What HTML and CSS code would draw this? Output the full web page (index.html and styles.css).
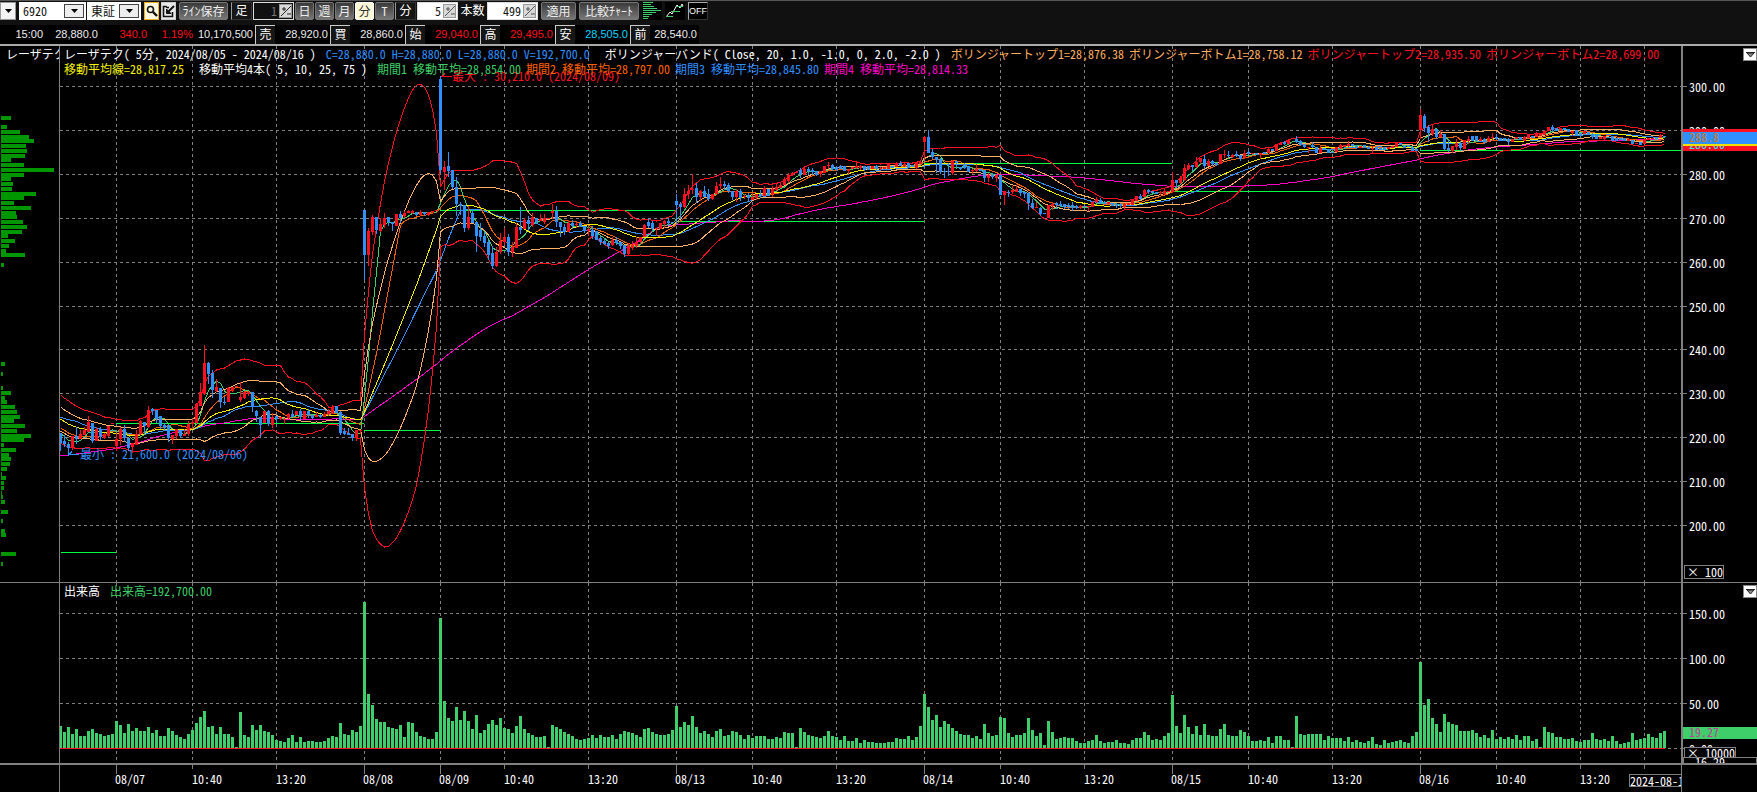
FILE: index.html
```html
<!DOCTYPE html>
<html lang="ja">
<head>
<meta charset="utf-8">
<title>レーザテク 6920 - 5分足チャート</title>
<link rel="stylesheet" href="styles.css">
</head>
<body>
<header class="top">
  <form class="toolbar" onsubmit="return false">
    <button class="drop" type="button" aria-label="メニュー"><svg width="7" height="4"><path d="M0 0h7L3.500 4z"/></svg></button>
    <span class="group tight">
      <span class="combo combo-code"><select aria-label="銘柄コード"><option>6920</option></select><span class="combo-arrow"><svg width="7" height="4"><path d="M0 0h7L3.500 4z"/></svg></span></span>
      <span class="combo combo-market"><select aria-label="市場"><option>東証</option></select><span class="combo-arrow"><svg width="7" height="4"><path d="M0 0h7L3.500 4z"/></svg></span></span>
    </span>
    <span class="group icons">
      <button class="icon-btn search" type="button" aria-label="検索"><svg width="12" height="12" viewBox="0 0 12 12"><circle cx="4.500" cy="4.500" r="3" fill="none" stroke="#111" stroke-width="1.600"/><path d="M7 7l4 4" stroke="#111" stroke-width="2.400"/></svg></button>
      <button class="icon-btn" type="button" aria-label="編集"><svg width="13" height="13" viewBox="0 0 13 13" fill="none" stroke="#111"><path d="M7 2.500H5L4 1.500H1.500v10h9V7" stroke-width="1.600"/><path d="M12 1L6 7" stroke-width="2"/><path d="M4.500 4v4.500H9z" fill="#111"/></svg></button>
    </span>
    <button class="btn btn-save" type="button">ﾗｲﾝ保存</button>
    <span class="group">
      <span class="label label-box">足</span>
      <span class="spin spin-off"><input aria-label="足" value="1" disabled><button type="button" aria-label="増減" disabled><svg width="12" height="12" viewBox="0 0 12 12"><path d="M1 11L11 1M2 4h4M4 2v4M7 9h4" stroke="#222" fill="none"/></svg></button></span>
      <button class="btn btn-sq" type="button">日</button>
      <button class="btn btn-sq" type="button">週</button>
      <button class="btn btn-sq" type="button">月</button>
      <button class="btn btn-sq on" type="button">分</button>
      <button class="btn btn-sq" type="button">T</button>
      <label class="label label-box" for="min">分</label>
      <span class="spin"><input id="min" value="5"><button type="button" aria-label="分を増減"><svg width="12" height="12" viewBox="0 0 12 12"><path d="M1 11L11 1M2 4h4M4 2v4M7 9h4" stroke="#555" fill="none"/></svg></button></span>
      <label class="label label-wide" for="bars">本数</label>
      <span class="spin spin-wide"><input id="bars" value="499"><button type="button" aria-label="本数を増減"><svg width="12" height="12" viewBox="0 0 12 12"><path d="M1 11L11 1M2 4h4M4 2v4M7 9h4" stroke="#555" fill="none"/></svg></button></span>
    </span>
    <button class="btn btn-apply" type="button">適用</button>
    <button class="btn btn-compare" type="button">比較ﾁｬｰﾄ</button>
    <button class="tool" type="button" aria-label="価格帯別出来高"><svg width="18" height="18" shape-rendering="crispEdges" stroke="#3ecf6a"><path d="M0 .5h10M0 2.500h8M0 4.500h11M0 6.500h14M0 8.500h18M0 10.500h13M0 12.500h9M0 14.500h6M0 16.500h5"/></svg></button>
    <button class="tool" type="button" aria-label="ライン"><svg width="18" height="18" fill="none"><path d="M0 15l4-5 2 2 5-9 3 3 2-4 1 2" stroke="#fff"/><path d="M0 14.500h7M5 9.500h9M11 4.500h6" stroke="#3ecf6a"/></svg></button>
    <button class="tool off" type="button">OFF</button>
  </form>
  <div class="quote">
    <span class="val w-time">15:00</span><span class="val w-last">28,880.0</span><span class="val w-chg red">340.0</span><span class="val w-pct red">1.19%</span><span class="val w-vol">10,170,500</span>
    <span class="tag">売</span><span class="val">28,920.0</span>
    <span class="tag">買</span><span class="val">28,860.0</span>
    <span class="tag">始</span><span class="val red">29,040.0</span>
    <span class="tag">高</span><span class="val red">29,495.0</span>
    <span class="tag">安</span><span class="val cyan">28,505.0</span>
    <span class="tag">前</span><span class="val w-prev">28,540.0</span>
  </div>
</header>
<main class="chart">
  <section class="cell side"><span class="side-name">レーザテク</span><svg id="profile" class="canvas"></svg></section>
  <section class="cell plot">
    <svg id="price" class="canvas"></svg>
    <div class="legend">
      <p><span>レーザテク( 5分, 2024/08/05 - 2024/08/16 )</span><span class="c-blue">C=28,880.0 H=28,880.0 L=28,880.0 V=192,700.0</span><span class="far">ボリンジャーバンド( Close, 20, 1.0, -1.0, 0, 2.0, -2.0 )</span><span class="c-peach">ボリンジャートップ1=28,876.38</span><span class="c-peach near">ボリンジャーボトム1=28,758.12</span><span class="c-red near">ボリンジャートップ2=28,935.50</span><span class="c-red near">ボリンジャーボトム2=28,699.00</span></p>
      <p><span class="c-yellow">移動平均線=28,817.25</span><span class="far">移動平均4本( 5, 10, 25, 75 )</span><span class="c-green">期間1 移動平均=28,854.00</span><span class="c-orange near">期間2 移動平均=28,797.00</span><span class="c-blue near">期間3 移動平均=28,845.80</span><span class="c-magenta near">期間4 移動平均=28,814.33</span></p>
    </div>
  </section>
  <section class="cell scale"><svg id="price-scale" class="canvas"></svg><button class="menu" type="button" aria-label="株価メニュー"><svg width="9" height="6"><path d="M0 .5h9M1 1l3.500 4L8 1z" fill="#888" stroke="#222"/></svg></button></section>
  <section class="cell side"></section>
  <section class="cell plot">
    <svg id="volume" class="canvas"></svg>
    <div class="legend"><p><span>出来高</span><span class="c-green">出来高=192,700.00</span></p></div>
  </section>
  <section class="cell scale"><svg id="volume-scale" class="canvas"></svg><button class="menu" type="button" aria-label="出来高メニュー"><svg width="9" height="6"><path d="M0 .5h9M1 1l3.500 4L8 1z" fill="#888" stroke="#222"/></svg></button></section>
  <section class="cell side last"></section>
  <section class="cell plot last"><svg id="dates" class="canvas"></svg><span class="cursor-date">2024-08-1</span></section>
  <section class="cell scale last thin"></section>
</main>
<script src="chart.js"></script>
</body>
</html>
```
FILE: styles.css
```css
* { box-sizing: border-box; }
body {
  margin: 0; min-height: 100vh; display: flex; flex-direction: column;
  background: #000; color: #fff; overflow: hidden;
  font: 12px/15px "Noto Sans CJK JP", sans-serif;
  font-feature-settings: "hwid" 1;
}
button, input, select { font: inherit; font-feature-settings: inherit; color: inherit; margin: 0; padding: 0; border: 0; border-radius: 0; }
svg { display: block; }
.top { background: #111; border-top: 1px solid #555; border-bottom: 2px solid #a8aaac; }

.toolbar { display: flex; align-items: center; gap: 3px; height: 20px; line-height: 16px; }
.group { display: flex; align-items: center; gap: 1px; }
.group.icons { gap: 2px; }
.drop { width: 16px; height: 18px; background: #f4f4f4; border: 1px solid #999; display: grid; place-items: center; }
.combo { position: relative; height: 18px; background: #fff; }
.combo-code { width: 67px; }
.combo-market { width: 54px; }
.combo select { appearance: none; width: 100%; height: 18px; background: transparent; color: #111; padding-left: 4px; outline: 0; }
.combo-arrow { position: absolute; right: 2px; top: 2px; width: 20px; height: 14px; border: 1px solid #444; background: #eee; display: grid; place-items: center; pointer-events: none; }
.icon-btn { width: 15px; height: 18px; background: #e8e8e8; border: 1px solid #ccc; display: grid; place-items: center; }
.icon-btn.search { border-color: #f0b020; background: #fff8e0; }
.btn { height: 18px; background: linear-gradient(#3a3a3a, #777); border: 1px solid #777; border-radius: 2px; color: #eee; line-height: 14px; text-align: center; white-space: nowrap; overflow: hidden; }
.btn-save { width: 49px; }
.btn-sq { width: 19px; }
.btn-sq.on { background: #fdf9d8; color: #333; border-color: #fff; }
.btn-apply { width: 35px; }
.btn-compare { width: 60px; }
.label { height: 18px; text-align: center; }
.label-box { width: 21px; background: #161616; border: 1px solid #333; border-left-color: #999; line-height: 14px; }
.label-wide { width: 27px; }
.spin { display: flex; width: 41px; height: 18px; background: #fff; border: 1px solid #ddd; padding: 1px; color: #111; }
.spin input { flex: 1; min-width: 0; text-align: right; background: transparent; padding-right: 2px; outline: 0; line-height: 14px; }
.spin button { width: 13px; background: #d8d8d8; border: 1px solid #999; display: grid; place-items: center; overflow: hidden; }
.spin-off { background: #111; color: #666; }
.spin-off input { color: #777; }
.spin-wide { width: 51px; }
.tool { width: 20px; height: 18px; background: #000; display: grid; place-items: center; }
.tool.off { border: 1px solid #333; border-top-color: #aaa; border-left-color: #aaa; font: 9px/14px "Liberation Sans", sans-serif; }

.quote { display: flex; align-items: center; height: 23px; padding-top: 4px; line-height: 18px; }
.val { width: 55px; height: 19px; padding-right: 2px; background: #000; text-align: right; color: #eee; font-family: "Liberation Sans", sans-serif; font-size: 11px; }
.w-time { width: 45px; }
.w-last { width: 55px; }
.w-chg { width: 49px; }
.w-pct { width: 46px; }
.w-vol { width: 60px; }
.w-prev { width: 49px; }
.tag { width: 20px; height: 19px; background: #161616; border-top: 1px solid #ccc; border-left: 1px solid #ccc; text-align: center; line-height: 16px; }
.red { color: #ff1018; }
.cyan { color: #00d8ff; }

.chart { flex: 1; display: grid; grid-template-columns: 60px 1fr 76px; grid-template-rows: 1fr 182px 27px; }
.cell { position: relative; min-width: 0; min-height: 0; overflow: hidden; border-bottom: 1px solid #808080; }
.cell:nth-child(n+4) { border-bottom-width: 2px; }
.cell.last { border-bottom: 0; }
.side { border-right: 1px solid #808080; }
.scale { border-left: 2px solid #808080; }
.scale.thin { border-left-width: 1px; }
.canvas { position: absolute; inset: 0; width: 100%; height: 100%; }
.side-name { position: absolute; left: 6px; top: 0; white-space: nowrap; }
.legend { position: relative; padding: 0 4px; }
.legend p { margin: 0; display: flex; gap: 10px; white-space: nowrap; height: 15px; }
.legend .near { margin-left: -5px; }
.legend .far { margin-left: 5px; }
.menu { position: absolute; right: 0; top: 2px; width: 14px; height: 13px; background: #fff; border: 1px solid #888; display: grid; place-items: center; }
.cursor-date { position: absolute; right: 0; top: 9px; width: 52px; height: 13px; line-height: 11px; border: 1px solid #808080; border-right: 0; background: #000; white-space: nowrap; overflow: hidden; }

.c-blue { color: #3090ff; }
.c-peach { color: #ffb060; }
.c-red { color: #ff1020; }
.c-yellow { color: #f4f000; }
.c-green { color: #3ecf6a; }
.c-orange { color: #ff6000; }
.c-magenta { color: #ff00c8; }

.canvas text { fill: #fff; font-size: 12px; }
.canvas rect, .canvas line, .canvas polyline { shape-rendering: crispEdges; }
.canvas .grid { stroke: #808080; stroke-dasharray: 3 3; }
.canvas .tick { stroke: #808080; }
.canvas polyline { fill: none; stroke-width: 1; }
.canvas .level { stroke: #00ff40; }
.canvas .zero { stroke: #ff1020; }
.canvas .box { fill: #000; stroke: #808080; }
.canvas .t-red { fill: #ff1020; }
.canvas .t-blue { fill: #3090ff; }
.canvas .t-orange { fill: #d07820; }
.canvas .t-cyan { fill: #30e8f0; }
.canvas .t-pink { fill: #c0409a; }
```
FILE: chart.js
```js
const NS = 'http://www.w3.org/2000/svg';
function layer(id, ox, oy) {
  const g = document.createElementNS(NS, 'g');
  g.setAttribute('transform', `translate(${-ox},${-oy})`);
  document.getElementById(id).append(g);
  return g;
}
function add(g, tag, attrs, text) {
  const el = document.createElementNS(NS, tag);
  for (const k in attrs) el.setAttribute(k, attrs[k]);
  if (text) el.textContent = text;
  g.append(el);
}
const hline = (g, x1, x2, y, cls) => add(g, 'line', { x1, x2, y1: y + 0.5, y2: y + 0.5, class: cls });
const vline = (g, x, y1, y2, cls) => add(g, 'line', { x1: x + 0.5, x2: x + 0.5, y1, y2, class: cls });

const LEFT = 60, STEP = 4, WIDE = 4000;
const X = i => LEFT + i * STEP;
const RED = '#ff1020', BLUE = '#3090ff', GREEN = '#3ecf6a';

/* One item per bar: direction, body top, body height, upper wick, lower wick */
const candles = `
d433.10.0.8 d441.3.6.3 d444.4.2.8 u436.11.0.3 d436.3.9.5 u434.5.4.0 u430.5.3.0 u422.10.6.0 d423.18.0.2 u429.12.2.0
d429.8.2.3 u434.4.1.1 u426.10.0.1 u423.1.0.0 u439.7.6.5 u429.10.2.6 d429.9.4.4 d438.10.0.3 u443.4.0.6 u434.11.4.0
u421.13.1.1 d422.4.0.8 u410.17.4.1 d409.2.1.4 d410.9.0.4 d416.10.0.3 d425.3.2.3 d425.13.0.4 u435.4.0.5 u429.7.0.3
d430.6.0.2 u434.2.5.0 u424.10.3.2 u422.2.3.5 u404.19.1.1 u392.14.9.0 u363.31.18.1 d363.11.1.10 d373.17.3.8 u387.4.8.1
d388.14.0.6 d402.1.5.2 u388.14.1.0 u387.4.0.1 u386.1.0.0 u397.3.15.2 u392.6.1.1 u392.2.1.2 d392.15.0.5 d411.5.1.6
d417.8.0.12 u411.12.0.0 d411.13.1.2 u417.8.4.3 d416.3.0.4 u417.2.0.1 u419.1.1.4 u414.4.1.1 d414.3.4.0 u411.4.0.0
d411.6.2.3 u411.8.0.0 d411.4.2.3 d415.3.0.1 u415.2.3.0 d415.2.1.1 u414.3.2.0 u411.3.2.2 u407.7.2.0 d406.7.0.0
d412.21.1.2 d431.3.3.1 d433.2.5.0 d434.4.0.3 u430.8.0.3 u430.1.0.3
d210.45.0.25 u231.24.3.11 u217.15.2.3 d217.13.0.4 u224.7.6.1 u218.7.5.3 d217.5.0.4 d222.2.0.7 u214.12.0.0 d214.4.3.5
u213.3.2.2 u211.2.1.0 u211.2.1.1 d212.3.0.1 u212.3.2.1 d212.2.0.2 u212.3.0.1 u211.2.0.0 u210.1.0.0
d79.91.3.3 u167.5.6.18 d166.5.14.6 d170.17.0.2 d187.17.10.12 d204.2.2.9 d205.23.0.4 u217.11.11.2 d213.10.4.0 d222.14.0.16
d230.7.7.4 d236.7.4.4 d242.13.2.5 d253.13.7.3 u252.14.5.1 u241.11.8.2 u237.5.9.3 d237.15.3.4 u247.5.5.5 u227.21.4.0
d227.3.20.4 u220.9.2.0 d220.4.4.7 u217.8.4.2 d218.4.0.1 u219.2.5.0 u218.4.4.2 u218.1.0.0 u211.2.7.6 d211.11.5.5
d222.5.0.10 d227.5.3.3 u223.9.3.0 d223.3.3.3 u224.1.2.3 d223.4.2.0 d226.5.0.2 u229.2.2.5 d230.6.4.3 d231.9.0.0
d238.4.2.3 d241.3.3.1 d243.3.1.3 u240.5.3.1 d240.3.3.2 d242.4.0.3 d245.9.0.3 u245.9.2.1 u245.3.4.2 u242.4.5.2
u237.5.0.2 u225.12.1.0 d222.4.4.2 d223.6.2.2 u228.1.0.7 u223.6.0.0 u221.3.1.4 d221.2.3.3 d222.1.0.0
d201.4.7.20 d204.3.2.12 u194.13.6.1 u191.3.6.5 u189.1.15.4 d188.9.5.6 u191.6.1.4 d191.6.5.0 d194.5.5.2 u194.5.0.1
u186.8.4.0 u184.2.7.3 d184.2.3.4 d185.6.2.2 d191.6.0.3 u191.6.2.5 d191.7.2.3 u196.1.2.2 d195.3.2.4 u197.3.4.0
u194.4.0.2 d194.2.4.2 u188.8.2.0 d189.6.0.0 u189.5.3.3 u187.3.4.1 u185.3.2.0 u179.6.2.0 u175.6.2.2 u173.2.1.1
u172.1.0.0 d170.4.2.4 u169.6.3.0 d169.2.2.4 d170.2.2.3 d171.4.0.1 u171.3.0.3 u166.7.0.0 u165.1.3.3 d165.4.1.2
d167.3.1.1 d166.3.1.0 d166.5.0.0 u169.2.0.3 u167.2.0.0 u166.2.3.1 u166.2.1.2 d166.4.0.1 d166.4.0.0 u166.3.0.0
d166.3.1.2 u168.1.1.1 u167.2.0.0 u164.5.1.0 d166.2.0.0 u163.4.1.0 d163.3.2.0 u164.2.2.1 d163.5.0.0 d165.2.0.0
u162.6.0.1 u162.2.0.0
u137.5.1.18 d137.16.7.0 d152.5.3.2 d157.3.0.13 d159.13.1.2 d171.1.3.6 d171.1.8.4 u161.12.1.2 d161.2.0.5 d167.2.0.1
d165.3.2.1 d166.6.0.0 u170.1.1.3 u169.2.5.1 d169.2.0.0 d170.8.0.4 u175.3.2.4 d175.2.2.2 u175.3.0.4 d175.20.0.0
u191.4.0.10 d192.1.2.4 u190.2.4.2 u189.3.4.0 d189.4.0.3 d192.2.0.4 d193.10.1.7 d203.5.4.1 u207.1.5.0 d208.6.1.2
d213.1.0.0 u205.13.0.0 u204.2.2.4 d203.2.1.4 d204.2.3.1 d204.3.0.2 d205.2.2.2 d205.3.3.3 d206.2.1.1 u206.2.1.1
d206.1.1.0 u206.1.0.4 u202.5.1.0 u199.3.2.1 d200.3.2.1 d202.1.1.1 u202.2.0.0 d203.3.0.0 d204.2.1.2 d204.2.1.2
u204.3.1.2 u203.2.0.0 u200.5.0.0 u196.5.0.0 d196.3.2.1 u190.7.1.0 d190.2.1.2 d191.2.0.0 d192.2.0.0 u192.1.1.2
u191.3.2.1 u191.1.0.0
u180.12.8.1 d180.3.0.5 u178.5.2.1 u168.12.4.1 u165.4.2.1 d165.2.0.4 u162.5.5.1 u158.4.0.2 d159.7.4.3 u161.5.2.0
d161.3.1.2 d163.2.0.1 u154.10.0.0 u154.1.4.3 d155.1.4.2 u155.2.1.1 d154.2.3.1 d155.4.0.2 u153.5.3.1 d152.2.2.1
u153.1.0.0 d153.2.0.0 u153.2.0.4 d152.2.0.0 u149.4.1.0 d149.2.0.0 u144.7.0.0 u143.2.0.0 d142.2.1.1 u140.4.0.0
u138.1.0.0 d139.3.3.1 d141.4.1.1 d144.3.0.1 u147.1.0.5 d145.2.3.1 d147.6.0.0 u148.5.2.0 d148.2.0.0 d149.4.0.0
d152.1.0.0 u147.5.0.0 u145.3.1.1 u145.2.0.0 u144.2.3.1 d144.2.0.1 d146.2.1.1 u146.2.0.0 d145.3.0.0 d147.2.0.0
u148.1.2.4 d147.3.0.0 d148.2.0.0 d147.3.0.0 u147.2.0.0 u146.2.0.0 u143.4.1.0 d143.2.0.0 d146.2.0.0 d145.2.0.0
d147.4.0.0 d149.2.0.0
u115.15.6.9 d116.12.2.4 d127.6.2.9 u129.5.5.2 d129.8.0.2 u134.3.4.0 d134.15.0.1 d148.2.8.2 u146.5.0.2 u143.4.4.3
d143.5.2.3 u140.9.0.0 u139.2.3.3 d136.5.0.0 d136.5.0.0 u139.2.2.0 d139.2.1.3 u138.3.2.1 u137.1.4.3 d137.2.3.1
d138.2.0.0 d138.3.0.0 d139.3.1.3 u139.3.0.0 u137.2.0.0 d137.3.0.0 u137.4.1.0 u135.3.0.0 d136.2.0.0 u134.3.2.0
u134.2.0.0 u131.4.1.0 u127.4.0.0 d127.3.2.2 d128.3.0.0 u128.3.0.0 d128.2.0.0 d129.3.0.0 u131.2.0.3 d130.5.0.0
d133.2.0.0 u131.3.0.0 d132.3.0.0 d134.3.1.2 d135.4.0.0 u137.2.0.0 u136.3.0.0 d137.1.0.0 d136.5.0.0 d138.3.0.0
d138.2.0.0 d138.3.0.0 u139.2.0.0 d140.4.0.0 u143.1.0.0 d142.3.0.0 u139.5.0.0 u138.2.0.0 u138.1.0.0 d137.2.0.0
u135.3.1.0 d136.1.0.0`.trim().split(/\s+/).map(s => {
  const [top, h, up, down] = s.slice(1).split('.').map(Number);
  return { rise: s[0] === 'u', top, h, up, down, close: s[0] === 'u' ? top : top + h };
});

const volumes = `
22 16 21 14 19 12 12 17 19 15 14 12 13 14 27 23 15 24 17 20 17 17 21 15 18 12 12 20 17 13 11 9 14
18 25 31 37 21 22 14 21 14 14 11 1 36 13 11 23 18 23 17 16 13 8 7 6 10 13 6 11 6 7 7 6 6 7 10 12 11 25 14 13 18 16 22
146 54 43 29 26 26 21 20 19 23 11 26 25 16 12 11 9 9 16
130 47 30 27 41 28 37 27 19 33 15 18 24 28 23 30 20 19 15 22 32 19 15 13 11 11 12 1 23 21 19 16 14 12 9 8 9 10 13 10
13 11 11 13 9 14 17 16 15 13 11 19 20 16 14 13 13 14 18
42 21 26 23 32 21 15 17 14 11 17 19 12 13 17 16 13 9 13 10 12 12 12 9 9 11 10 16 15 15 1 20 16 13 12 11 10 12 17 12
11 8 12 7 7 10 5 8 6 6 5 5 5 6 6 10 9 9 12 8 11 22
54 41 28 33 21 27 24 20 17 14 13 13 10 12 9 24 15 12 13 31 30 15 11 13 13 15 30 18 12 15 3 27 16 9 10 11 10 10 7 5
5 7 8 13 7 5 6 6 8 5 5 4 8 10 10 16 13 8 9 8 12 15
53 22 15 33 21 14 22 13 24 13 12 12 19 24 13 12 12 18 16 12 7 7 8 7 11 5 12 12 8 8 1 32 14 13 14 14 14 14 8 12
10 10 10 7 11 6 8 6 5 7 11 4 3 8 5 6 7 8 6 5 12 16
86 43 49 30 24 16 34 26 24 23 17 17 17 18 15 11 13 10 18 9 11 9 11 9 13 8 12 12 7 9 1 21 16 15 11 11 9 9 10 7
6 8 8 15 9 8 9 7 12 7 4 5 6 15 8 9 10 14 11 10 15 17`.trim().split(/\s+/).map(Number);

/* Closes ahead of the first visible bar, so the averages start complete */
const fill = (n, v) => Array(n).fill(v);
const before = [...fill(14, 472), ...fill(19, 511), ...fill(17, 440), ...fill(5, 416),
  388, 392, 398, 404, 408, 412, 415, 416, 418, 419, 420, 420, 421, 422, 423, 426, 428, 430, 432, 434];
const closes = before.concat(candles.map(c => c.close));
const average = (n, k = 0) => candles.map((_, i) => {
  const end = before.length + i + 1, part = closes.slice(end - n, end);
  const mean = part.reduce((a, b) => a + b) / n;
  return mean + k * Math.sqrt(part.reduce((a, b) => a + (b - mean) ** 2, 0) / (n - 1));
});

const days = [116, 364, 440, 676, 924, 1172, 1420];
const times = [[192, '10:40'], [276, '13:20'], [504, '10:40'], [588, '13:20'], [752, '10:40'], [836, '13:20'],
  [1000, '10:40'], [1084, '13:20'], [1248, '10:40'], [1332, '13:20'], [1496, '10:40'], [1580, '13:20'], [1644, '']];
const dayNames = ['08/07', '08/08', '08/09', '08/13', '08/14', '08/15', '08/16'];
const priceRows = [86, 130, 174, 218, 262, 306, 349, 393, 437, 481, 525];
const TOP = 46, VTOP = 583, ZERO = 748;

/* Price panel */
const p = layer('price', LEFT, TOP);
priceRows.forEach(y => hline(p, LEFT, WIDE, y, 'grid'));
[...days, ...times.map(t => t[0])].forEach(x => vline(p, x, TOP, WIDE, 'grid'));
[[61, 116, 552], [116, 364, 423], [364, 440, 430], [440, 676, 210], [676, 924, 221], [924, 1172, 163], [1172, 1420, 191], [1420, WIDE, 150]]
  .forEach(([a, b, y]) => hline(p, a, b, y, 'level'));
[[75, 0, '#ff00c8'], [25, 0, BLUE], [10, 0, '#f06000'], [5, 0, GREEN], [20, 0, '#f4f000'],
 [20, 1, '#ffb060'], [20, -1, '#ffb060'], [20, 2, RED], [20, -2, RED]].forEach(([n, k, stroke]) =>
  add(p, 'polyline', { stroke, points: average(n, k).map((y, i) => `${X(i) + 0.5},${y.toFixed(1)}`).join(' ') }));
candles.forEach((c, i) => {
  const color = c.rise ? RED : BLUE;
  add(p, 'rect', { x: X(i), y: c.top - c.up, width: 1, height: c.h + c.up + c.down, fill: color });
  add(p, 'rect', { x: X(i) - 1, y: c.top, width: 3, height: c.h, fill: color });
});
add(p, 'polyline', { stroke: RED, points: '452,76.5 442,76.5 445,73.5' });
add(p, 'text', { x: 452, y: 81, class: 't-red' }, '最大 : 30,210.0 (2024/08/09)');
add(p, 'polyline', { stroke: BLUE, points: '79,454.5 69,454.5 72,451.5' });
add(p, 'text', { x: 80, y: 459, class: 't-blue' }, '最小 : 21,600.0 (2024/08/06)');

/* Volume by price */
const prof = layer('profile', 0, TOP);
const profY = [116,125,130,135,139,144,149,154,158,163,168,173,177,182,187,192,196,201,206,211,215,220,225,230,234,239,244,249,253,263,362,372,386,391,396,400,405,410,415,419,424,429,434,438,443,448,453,457,462,467,472,476,481,486,491,495,500,510,519,529,533,552,562];
const profW = [10,6,19,28,33,25,26,24,10,23,53,23,10,12,11,35,23,13,30,15,16,22,26,21,7,14,8,5,24,3,4,2,2,10,4,6,14,16,19,13,24,16,30,23,3,15,8,10,9,6,1,5,3,3,1,2,4,7,2,4,5,15,2];
profY.forEach((y, i) => add(prof, 'rect', { x: 1, y, width: profW[i], height: 4, fill: '#009600' }));

/* Volume panel */
const v = layer('volume', LEFT, VTOP);
[613, 658, 703, 748].forEach(y => hline(v, LEFT, WIDE, y, 'grid'));
[...days, ...times.map(t => t[0])].forEach(x => vline(v, x, VTOP, WIDE, 'grid'));
volumes.forEach((h, i) => add(v, 'rect', { x: X(i) - 1, y: ZERO - h, width: 3, height: h, fill: GREEN }));
hline(v, LEFT, X(candles.length - 1) + 1, ZERO, 'zero');

/* Scales */
const SX = 1683;
const ps = layer('price-scale', SX, TOP);
priceRows.forEach((y, i) => {
  hline(ps, SX, SX + 4, y, 'tick');
  add(ps, 'text', { x: 1689, y: y + 6 }, `${300 - i * 10}.00`);
});
add(ps, 'rect', { x: SX, y: 129, width: WIDE, height: 22, fill: RED });
add(ps, 'text', { x: 1689, y: 149, class: 't-cyan' }, '286.00');
add(ps, 'rect', { x: SX, y: 132, width: WIDE, height: 12, fill: BLUE });
add(ps, 'rect', { x: SX, y: 144, width: WIDE, height: 2, fill: '#f0e000' });
add(ps, 'text', { x: 1689, y: 142, class: 't-orange' }, '288.8');
add(ps, 'rect', { x: 1684.5, y: 565.5, width: 39, height: 13, class: 'box' });
add(ps, 'text', { x: 1687, y: 577 }, '× 100');

const vs = layer('volume-scale', SX, VTOP);
[[613, '150.00'], [658, '100.00'], [703, '50.00'], [748, '0.00']].forEach(([y, t]) => {
  hline(vs, SX, SX + 4, y, 'tick');
  add(vs, 'text', { x: 1689, y: y + 6 }, t);
});
add(vs, 'rect', { x: SX, y: 727, width: WIDE, height: 12, fill: GREEN });
add(vs, 'text', { x: 1689, y: 737, class: 't-pink' }, '19.27');
add(vs, 'rect', { x: 1684.5, y: 747.5, width: 51, height: 13, class: 'box' });
add(vs, 'text', { x: 1687, y: 758 }, '× 10000');
add(vs, 'rect', { x: 1683.5, y: 757.5, width: 73, height: 10, class: 'box' });
add(vs, 'text', { x: 1689, y: 767 }, '-16.29');

/* Dates */
const d = layer('dates', LEFT, 765);
days.forEach((x, i) => { vline(d, x, 765, 774, 'tick'); add(d, 'text', { x: x - 1, y: 784 }, dayNames[i]); });
times.forEach(([x, t]) => { vline(d, x, 765, 769, 'tick'); if (t) add(d, 'text', { x, y: 784 }, t); });
```
